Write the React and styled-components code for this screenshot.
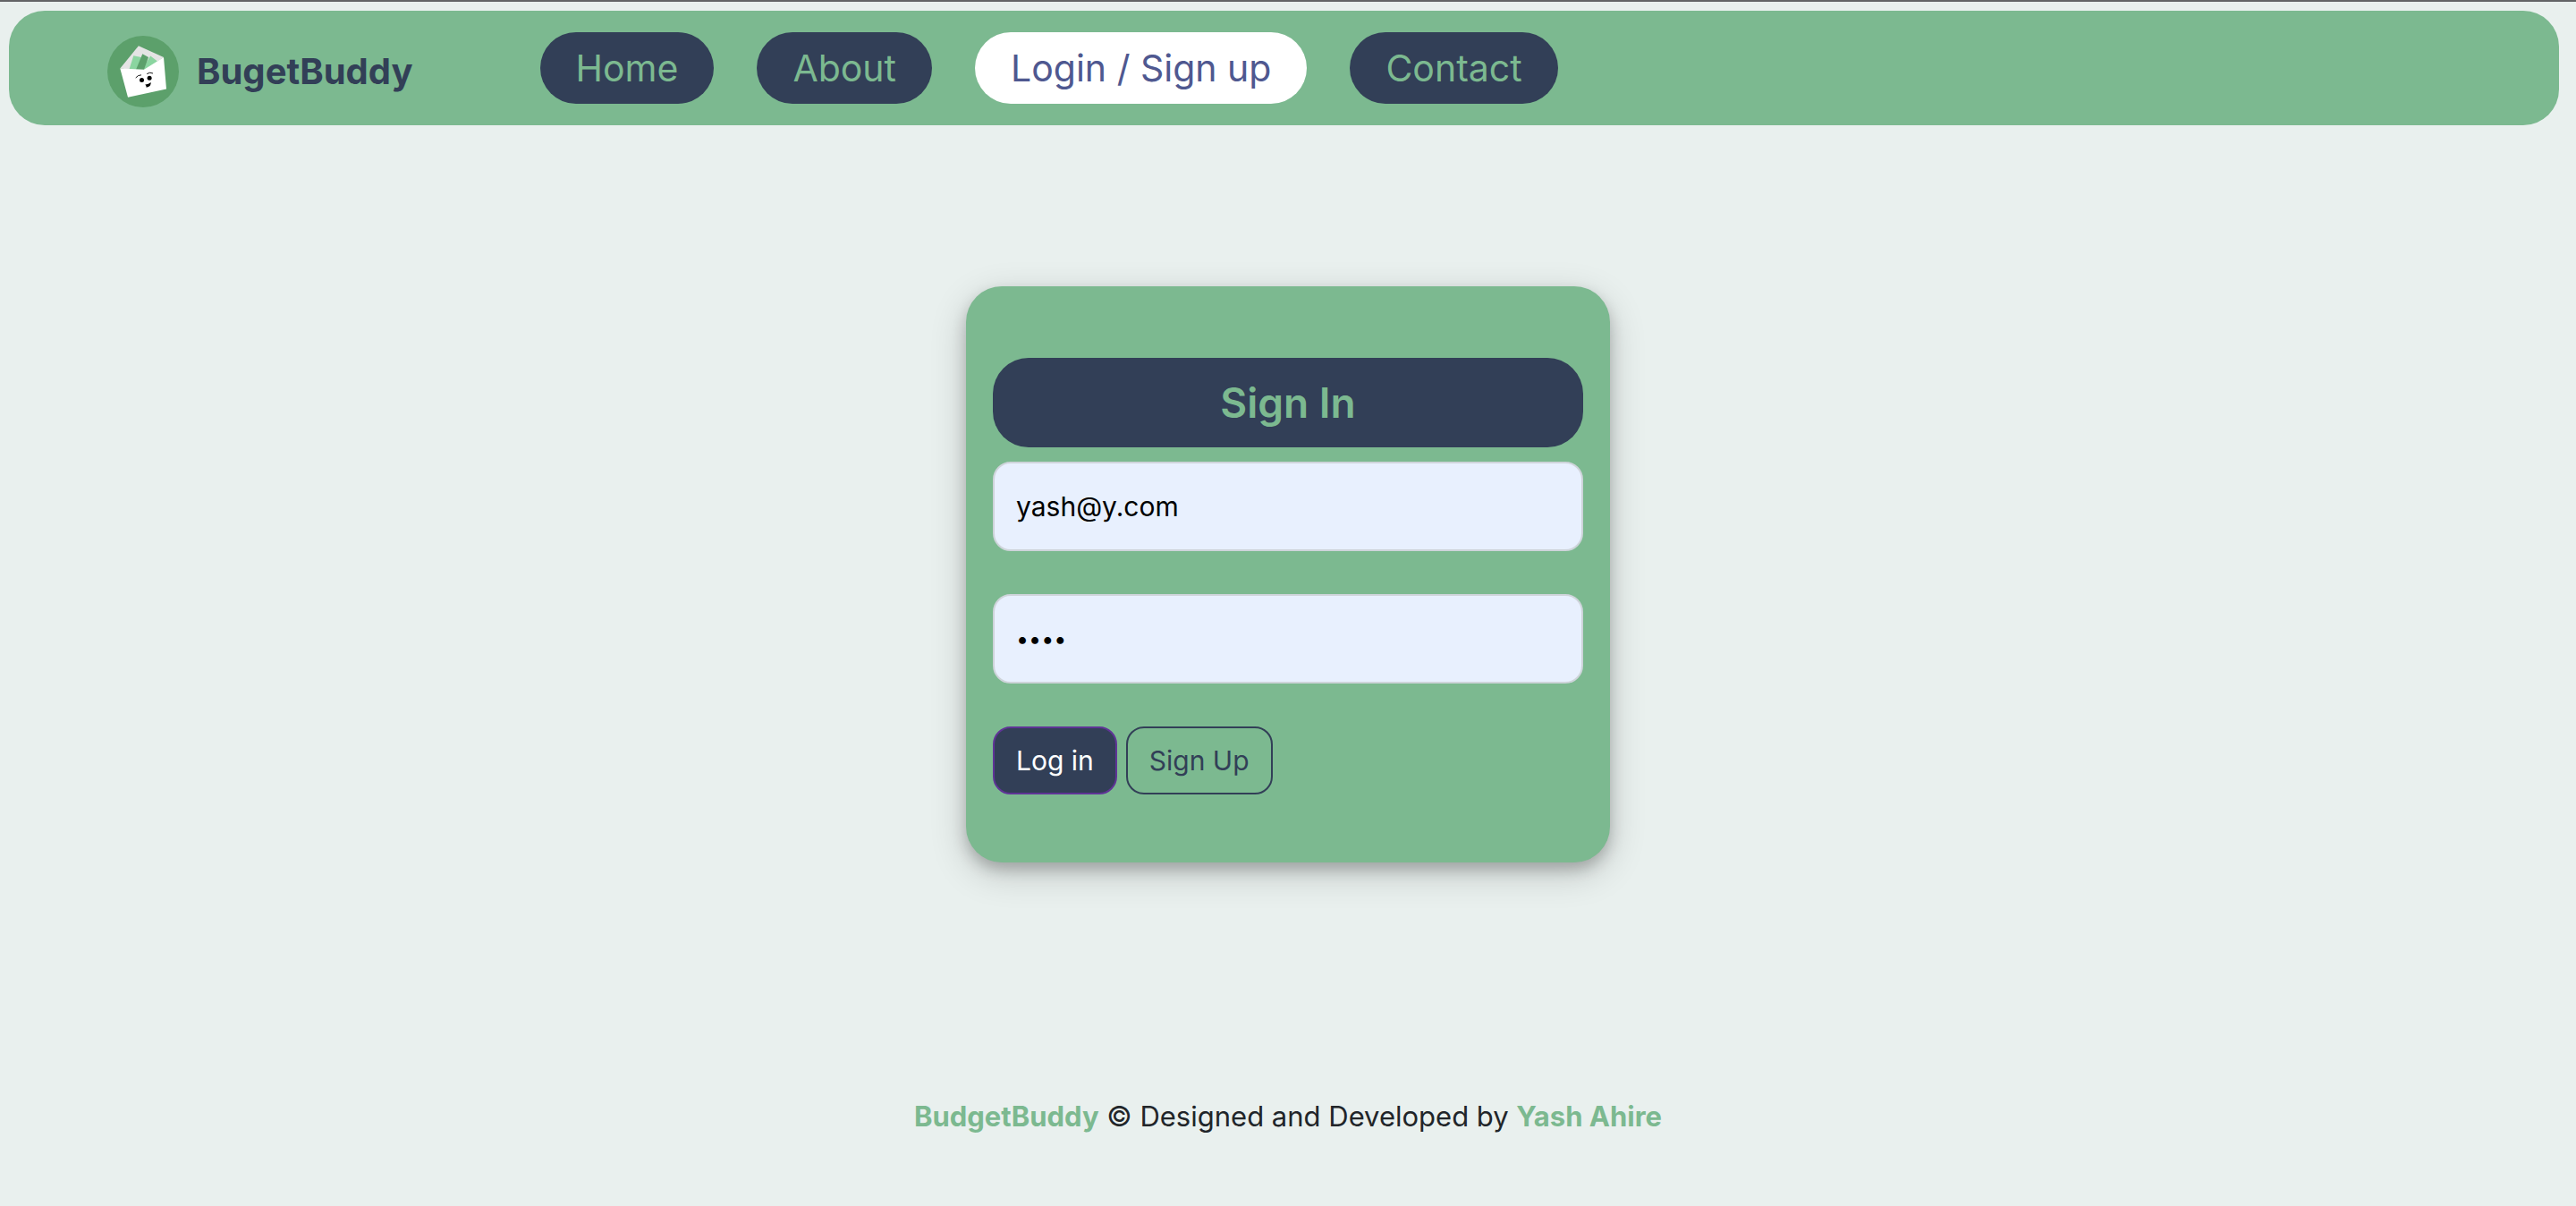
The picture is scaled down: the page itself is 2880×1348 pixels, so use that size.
import React, { useState } from "react";
import styled, { createGlobalStyle } from "styled-components";

const green = "#7cb990";
const navy = "#323f57";

const GlobalStyle = createGlobalStyle`
  *, *::before, *::after { box-sizing: border-box; }
  body {
    margin: 0;
    background: #e9f0ee;
    color: #212529;
    font-family: Inter, "Liberation Sans", sans-serif;
  }
`;

const Page = styled.div`
  display: flex;
  flex-direction: column;
  min-height: 100vh;
  border-top: 2px solid #636466;
`;

const Header = styled.header`
  display: flex;
  align-items: flex-start;
  gap: 142px;
  margin: 10px 19px 0 10px;
  padding: 24px 110px 20px;
  border-radius: 40px;
  background: ${green};
`;

const Brand = styled.a`
  display: flex;
  align-items: center;
  gap: 20px;
  margin-top: 4px;
  color: ${navy};
  font-size: 40px;
  line-height: 48px;
  font-weight: 700;
  text-decoration: none;
`;

const LogoArt = styled.svg`
  display: block;
  width: 80px;
  height: 80px;
`;

const Nav = styled.nav`
  display: flex;
  gap: 48px;
`;

const NavLink = styled.a`
  padding: 0 40px;
  border-radius: 40px;
  background: ${(p) => (p.$active ? "#ffffff" : navy)};
  color: ${(p) => (p.$active ? "#4f5890" : green)};
  font-size: 41px;
  line-height: 80px;
  text-decoration: none;
  white-space: nowrap;
`;

const Main = styled.main`
  display: flex;
  justify-content: center;
  padding-top: 180px;
`;

const Card = styled.form`
  display: flex;
  flex-direction: column;
  width: 100%;
  max-width: 720px;
  padding: 80px 30px 76px;
  border-radius: 40px;
  background: ${green};
  box-shadow: 0 8px 16px rgba(0, 0, 0, 0.2), 0 12px 40px rgba(0, 0, 0, 0.19);
`;

const Title = styled.h1`
  margin: 0 0 16px;
  border-radius: 40px;
  background: ${navy};
  color: ${green};
  font-size: 46px;
  line-height: 100px;
  font-weight: 600;
  text-align: center;
`;

const Input = styled.input`
  height: 100px;
  margin: 0 0 48px;
  padding: 0 24px;
  border: 2px solid #ced4da;
  border-radius: 20px;
  background: #e8f0fe;
  color: #000000;
  font-family: inherit;
  font-size: ${(p) => (p.type === "password" ? "25px" : "30px")};
`;

const Actions = styled.div`
  display: flex;
  gap: 10px;
`;

const Button = styled.button`
  padding: 0 24px;
  border: 2px solid ${(p) => (p.$primary ? "#5f3496" : navy)};
  border-radius: 20px;
  background: ${(p) => (p.$primary ? navy : "transparent")};
  color: ${(p) => (p.$primary ? "#ffffff" : navy)};
  font-family: inherit;
  font-size: 30px;
  line-height: 72px;
  cursor: pointer;
`;

const Footer = styled.footer`
  margin-top: 260px;
  padding: 0 24px 48px;
  font-size: 31px;
  line-height: 48px;
  text-align: center;
`;

const Accent = styled.strong`
  color: ${green};
  font-weight: 700;
`;

function Logo() {
  return (
    <LogoArt viewBox="0 0 80 80" aria-hidden="true">
      <circle cx="40" cy="40" r="40" fill="#5ca06b" />
      <path d="M14.3 36.4 34.9 11.2 63 24 41 39Z" fill="#e4e4e4" />
      <path d="M29.3 22.3 38 24 34 39H24Z" fill="#8bd5a0" />
      <path d="M48.2 22.5 56 28.5 44 39H38Z" fill="#8bd5a0" />
      <path d="M39.3 20.2 46 24 40.5 39H31.5Z" fill="#5ca06b" />
      <path d="M14.3 36.4 41 37.8 63 24 66 59.6 23 68.7Z" fill="#ffffff" />
      <circle cx="38.5" cy="49.5" r="2.5" />
      <circle cx="47.1" cy="47.3" r="2.5" />
      <path d="M31.7 47Q34 43.9 38 43.8M44.2 42.6Q47.5 40.2 51 42" fill="none" stroke="#000" strokeWidth="0.9" />
      <path d="M42.2 54.4Q46 54.6 48.7 52.1Q49 57.2 43.6 57.7Q43.9 55.8 42.2 54.4Z" />
    </LogoArt>
  );
}

const links = ["Home", "About", "Login / Sign up", "Contact"];

export default function App() {
  const [email, setEmail] = useState("yash@y.com");
  const [password, setPassword] = useState("yash");

  return (
    <>
      <GlobalStyle />
      <Page>
        <Header>
          <Brand href="#">
            <Logo />
            BugetBuddy
          </Brand>
          <Nav>
            {links.map((name) => (
              <NavLink key={name} href="#" $active={name === "Login / Sign up"}>
                {name}
              </NavLink>
            ))}
          </Nav>
        </Header>
        <Main>
          <Card onSubmit={(e) => e.preventDefault()}>
            <Title>Sign In</Title>
            <Input
              type="email"
              aria-label="Email"
              value={email}
              onChange={(e) => setEmail(e.target.value)}
            />
            <Input
              type="password"
              aria-label="Password"
              value={password}
              onChange={(e) => setPassword(e.target.value)}
            />
            <Actions>
              <Button type="submit" $primary>Log in</Button>
              <Button type="button">Sign Up</Button>
            </Actions>
          </Card>
        </Main>
        <Footer>
          <Accent>BudgetBuddy</Accent> © Designed and Developed by <Accent>Yash Ahire</Accent>
        </Footer>
      </Page>
    </>
  );
}
